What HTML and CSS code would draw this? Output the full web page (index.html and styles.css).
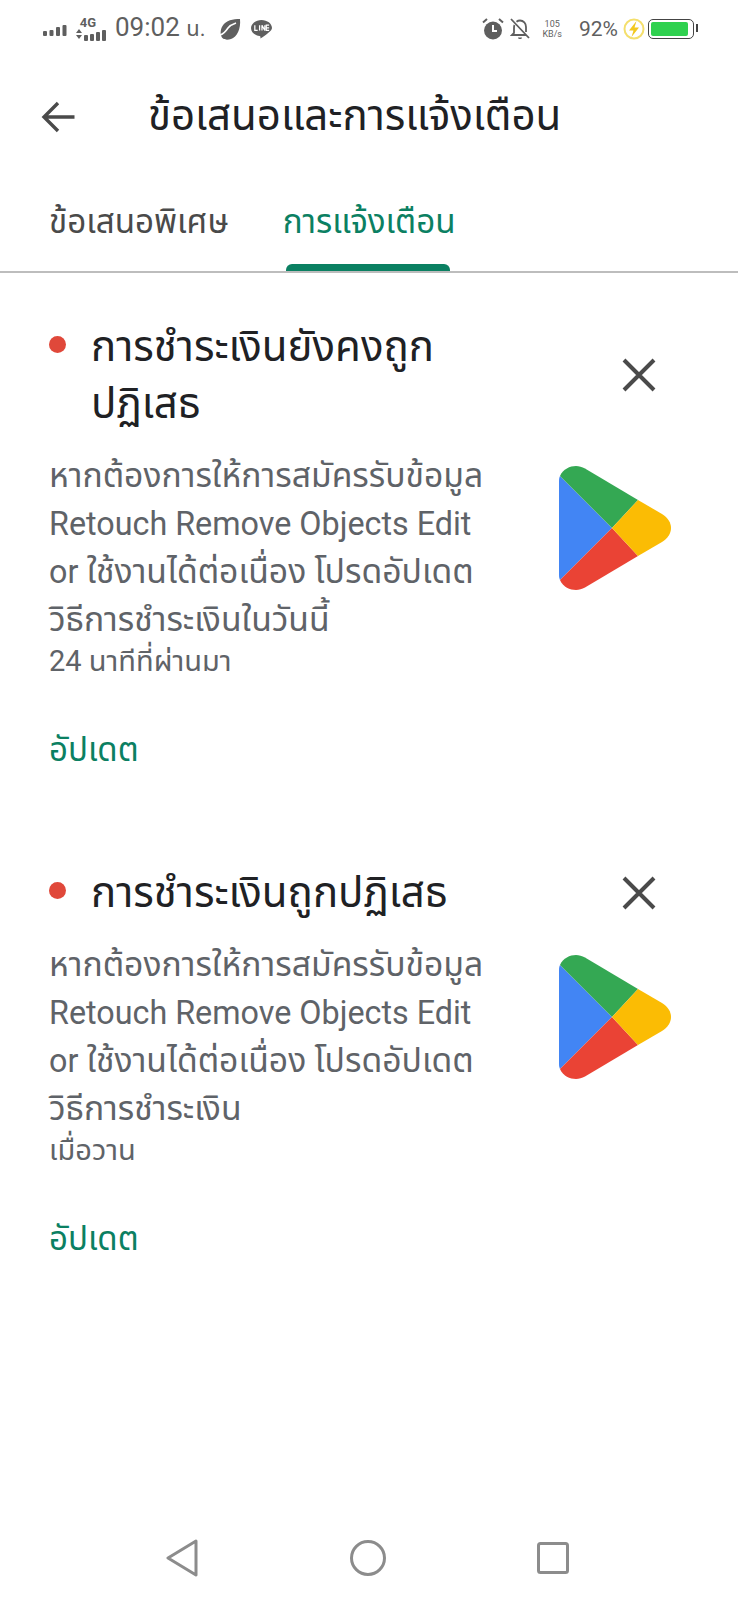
FILE: index.html
```html
<!DOCTYPE html>
<html lang="th">
<head>
    <meta charset="UTF-8">
    <meta name="viewport" content="width=device-width, initial-scale=1.0">
    <title>ข้อเสนอและการแจ้งเตือน</title>
    <link rel="stylesheet" href="styles.css">
</head>
<body>

<div class="screen">
    <div class="status-bar">
        <div class="status-left">
            <svg class="sb-signal" width="24" height="14" viewBox="0 0 24 14"><g fill="#5f5f5f"><rect x="0" y="9" width="4" height="5" rx="1"/><rect x="6.500" y="8" width="4" height="6" rx="1"/><rect x="13" y="5" width="4" height="9" rx="1"/><rect x="19.500" y="3" width="4" height="11" rx="1"/></g></svg>
            <div class="sb-net">
                <span class="sb-4g">4G</span>
                <svg width="32" height="13" viewBox="0 0 32 13"><g fill="#5f5f5f"><path d="M0 5 3 1 6 5zM0 7h6l-3 4z"/><rect x="8" y="7" width="4" height="6" rx="1"/><rect x="14" y="6" width="4" height="7" rx="1"/><rect x="20" y="4" width="4" height="9" rx="1"/><rect x="26" y="2" width="4" height="11" rx="1"/></g></svg>
            </div>
            <span class="sb-time">09:02 <span class="sb-unit">น.</span></span>
            <svg class="sb-leaf" width="21" height="21" viewBox="0 0 21 21"><path fill="#5f5f5f" d="M20 0C13 0 6 1 2.500 7 0 11 0 17 3 19.500 5 21 8 21 11 20 17 18 21 10 20 0z"/><path fill="none" stroke="#fff" stroke-width="1.600" d="M0 16C4 15 6 12 8 9c2-2.500 5-4 8-5"/></svg>
            <svg class="sb-line" width="21" height="21" viewBox="0 0 22 22"><path fill="#5f5f5f" d="M11 1C5 1 0 4.800 0 9.500 0 14 4 17.200 9 17.800c1 .2 1 1 .8 2.700 2-1 6-3.500 9-6.500 1.800-1.500 3.200-3 3.200-4.500C22 4.800 17 1 11 1z"/><path fill="none" stroke="#fff" stroke-width="1.300" d="M4 6.500V12h3M9 6.500V12M11.500 12V6.500L14.500 12V6.500M19 6.500h-3V12h3M16 9.200h3"/></svg>
        </div>
        <div class="status-right">
            <svg class="sb-alarm" width="22" height="22" viewBox="0 0 22 22"><circle cx="11" cy="12.500" r="9" fill="#5f5f5f"/><path d="M1 4.500 5 1M21 4.500 17 1" stroke="#5f5f5f" stroke-width="2" fill="none"/><path d="M11 7v6h4" stroke="#fff" stroke-width="2" fill="none"/></svg>
            <svg class="sb-bell" width="20" height="22" viewBox="0 0 20 22"><path fill="none" stroke="#5f5f5f" stroke-width="1.800" d="M1 1 19 20M4.500 7C4 8 4 9 4 10v5l-2 2h14M6.500 3.800C7.500 3 9 2.500 10 2.500c3.500 0 6 3 6 6.500v5"/><path d="M8 19.500h4c0 2-4 2-4 0z" fill="#5f5f5f"/></svg>
            <div class="sb-speed"><span>105</span><span>KB/s</span></div>
            <span class="sb-batt-text">92%</span>
            <svg class="sb-charge" width="22" height="22" viewBox="0 0 22 22"><circle cx="11" cy="11" r="9.500" fill="none" stroke="#f4df6c" stroke-width="2"/><path d="M13.500 3 6 12.500h4.500L8.500 19 16 9.500h-4.500z" fill="#f2c81e"/></svg>
            <div class="battery"><div class="battery-fill"></div></div>
        </div>
    </div>

    <div class="app-bar">
        <svg class="back-arrow" width="34" height="32" viewBox="0 0 34 32"><path fill="none" stroke="#4a4a4a" stroke-width="3.400" d="M33.500 16H3M17 2 3 16l14 14"/></svg>
        <div class="app-title">ข้อเสนอและการแจ้งเตือน</div>
    </div>

    <div class="tabs">
        <div class="tab">ข้อเสนอพิเศษ</div>
        <div class="tab active">การแจ้งเตือน</div>
    </div>

    <div class="notice notice-first">
        <div class="notice-head">
            <span class="dot"></span>
            <div class="notice-title">การชำระเงินยังคงถูก<br>ปฏิเสธ</div>
            <svg class="close" width="34" height="34" viewBox="0 0 34 34"><path stroke="#4a4a4a" stroke-width="4" d="M2 2 32 32M32 2 2 32"/></svg>
        </div>
        <div class="notice-body">
            <div class="notice-text">
                <p>หากต้องการให้การสมัครรับข้อมูล<br><span class="latin">Retouch Remove Objects Edit</span><br><span class="latin">or</span> ใช้งานได้ต่อเนื่อง โปรดอัปเดต<br>วิธีการชำระเงินในวันนี้</p>
                <div class="notice-time">24 นาทีที่ผ่านมา</div>
            </div>
            <svg class="play-logo" width="112" height="124" viewBox="0 0 112 124">
                <path fill="#4285f4" d="M1 10C.3 11.500 0 13 0 15v94c0 2 .3 3.500 1 5l52-52z"/>
                <path fill="#34a853" d="M1 10C4 3 11 0 17 0c3 0 6 1 9 2.500L79 34 53 62z"/>
                <path fill="#ea4335" d="M1 114c3 7 10 10 16 10 3 0 6-1 9-2.500L79 90 53 62z"/>
                <path fill="#fbbc04" d="M79 34l24 14c6 3.500 9 9 9 14s-3 10.500-9 14L79 90 53 62z"/>
            </svg>
        </div>
        <div class="notice-action">อัปเดต</div>
    </div>

    <div class="notice">
        <div class="notice-head">
            <span class="dot"></span>
            <div class="notice-title">การชำระเงินถูกปฏิเสธ</div>
            <svg class="close" width="34" height="34" viewBox="0 0 34 34"><path stroke="#4a4a4a" stroke-width="4" d="M2 2 32 32M32 2 2 32"/></svg>
        </div>
        <div class="notice-body">
            <div class="notice-text">
                <p>หากต้องการให้การสมัครรับข้อมูล<br><span class="latin">Retouch Remove Objects Edit</span><br><span class="latin">or</span> ใช้งานได้ต่อเนื่อง โปรดอัปเดต<br>วิธีการชำระเงิน</p>
                <div class="notice-time">เมื่อวาน</div>
            </div>
            <svg class="play-logo" width="112" height="124" viewBox="0 0 112 124">
                <path fill="#4285f4" d="M1 10C.3 11.500 0 13 0 15v94c0 2 .3 3.500 1 5l52-52z"/>
                <path fill="#34a853" d="M1 10C4 3 11 0 17 0c3 0 6 1 9 2.500L79 34 53 62z"/>
                <path fill="#ea4335" d="M1 114c3 7 10 10 16 10 3 0 6-1 9-2.500L79 90 53 62z"/>
                <path fill="#fbbc04" d="M79 34l24 14c6 3.500 9 9 9 14s-3 10.500-9 14L79 90 53 62z"/>
            </svg>
        </div>
        <div class="notice-action">อัปเดต</div>
    </div>

    <div class="nav-bar">
        <svg width="32" height="38" viewBox="0 0 32 38"><path fill="none" stroke="#8c8c8c" stroke-width="3" stroke-linejoin="round" d="M30 2 2 19l28 17z"/></svg>
        <svg width="36" height="36" viewBox="0 0 36 36"><circle cx="18" cy="18" r="16.500" fill="none" stroke="#8c8c8c" stroke-width="3"/></svg>
        <svg width="32" height="32" viewBox="0 0 32 32"><rect x="1.500" y="1.500" width="29" height="29" rx="2" fill="none" stroke="#8c8c8c" stroke-width="3"/></svg>
    </div>
</div>

</body>
</html>
```

FILE: styles.css
```css
* {
    box-sizing: border-box;
}

body {
    margin: 0;
    background-color: #fff;
    font-family: Roboto, "Noto Sans", "Noto Sans Thai", "DejaVu Sans", sans-serif;
    color: #202124;
}

.screen {
    width: 738px;
    height: 1600px;
    display: flex;
    flex-direction: column;
    overflow: hidden;
}

.status-bar {
    height: 60px;
    flex: none;
    display: flex;
    justify-content: space-between;
    align-items: center;
    padding: 0 44px 2px 43px;
    color: #5f5f5f;
}

.status-left,
.status-right {
    display: flex;
    align-items: center;
}

.sb-net {
    margin-left: 9px;
    display: flex;
    flex-direction: column;
    align-items: center;
}

.sb-4g {
    font-size: 13px;
    font-weight: 700;
    line-height: 10px;
    margin-right: 8px;
}

.sb-time {
    font-size: 26px;
    margin-left: 7px;
    white-space: nowrap;
}

.sb-unit {
    font-size: 22px;
}

.sb-leaf {
    margin-left: 14px;
}

.sb-line {
    margin-left: 10px;
}

.sb-bell {
    margin-left: 6px;
}

.sb-speed {
    margin-left: 12px;
    display: flex;
    flex-direction: column;
    align-items: center;
    font-size: 9px;
    line-height: 10px;
}

.sb-batt-text {
    font-size: 21px;
    margin-left: 17px;
}

.sb-charge {
    margin-left: 5px;
}

.battery {
    width: 46px;
    height: 20px;
    margin-left: 3px;
    padding: 2px;
    border: 1.500px solid #444;
    border-radius: 5px;
    position: relative;
}

.battery::after {
    content: "";
    position: absolute;
    right: -5px;
    top: 4px;
    width: 2px;
    height: 8px;
    background-color: #444;
}

.battery-fill {
    width: 93%;
    height: 100%;
    background-color: #2fd14f;
    border-radius: 2px;
}

.app-bar {
    height: 114px;
    flex: none;
    display: flex;
    align-items: center;
    padding-left: 41px;
}

.app-title {
    font-size: 42px;
    margin-left: 73px;
    white-space: nowrap;
}

.tabs {
    height: 99px;
    flex: none;
    display: flex;
    align-items: flex-start;
    padding: 24px 0 0 49px;
    gap: 54px;
    border-bottom: 2px solid #bdbdbd;
    font-size: 33.200px;
    position: relative;
}

.tab {
    color: #4a4a4a;
    height: 73px;
    white-space: nowrap;
}

.tab.active {
    color: #0b8062;
    position: relative;
}

.tab.active::after {
    content: "";
    position: absolute;
    left: 3px;
    right: 6px;
    bottom: 0;
    height: 7px;
    background-color: #0b8062;
    border-radius: 6px 6px 0 0;
}

.notice {
    padding: 0 49px;
}

.notice-first {
    padding-top: 45px;
    height: 591px;
}

.notice-head {
    display: flex;
    align-items: flex-start;
}

.dot {
    width: 17px;
    height: 17px;
    margin-top: 18px;
    background-color: #e0483a;
    border-radius: 50%;
    flex: none;
}

.notice-title {
    font-size: 42px;
    line-height: 57px;
    margin-left: 25px;
    flex: 1;
}

.close {
    margin-right: 33px;
    align-self: center;
    flex: none;
}

.notice-body {
    display: flex;
    justify-content: space-between;
    margin-top: 20px;
}

.notice-text p {
    margin: 0;
    font-size: 33.700px;
    line-height: 48px;
    color: #5f6368;
}

.latin {
    font-size: 32.300px;
}

.notice-time {
    font-size: 29px;
    line-height: 34px;
    color: #5f6368;
}

.play-logo {
    margin: 14px 18px 0 0;
    flex: none;
}

.notice-action {
    margin-top: 48px;
    font-size: 33px;
    color: #0b8062;
}

.nav-bar {
    margin-top: auto;
    height: 84px;
    flex: none;
    display: flex;
    align-items: center;
    justify-content: space-between;
    padding: 0 169px 0 166px;
}
```
